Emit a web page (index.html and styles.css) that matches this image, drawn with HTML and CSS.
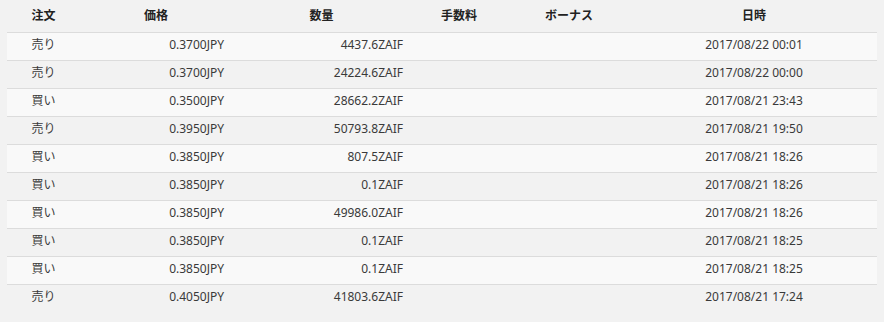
FILE: index.html
```html
<!DOCTYPE html>
<html lang="ja">
<head>
<meta charset="utf-8">
<link rel="stylesheet" href="styles.css">
</head>
<body>
<table class="trades">
  <colgroup>
    <col class="c-type"><col class="c-price"><col class="c-amount"><col class="c-fee"><col class="c-bonus"><col class="c-date">
  </colgroup>
  <thead>
    <tr><th>注文</th><th>価格</th><th>数量</th><th>手数料</th><th>ボーナス</th><th>日時</th></tr>
  </thead>
  <tbody>
    <tr><td class="center">売り</td><td class="num">0.3700JPY</td><td class="num">4437.6ZAIF</td><td></td><td></td><td class="center">2017/08/22 00:01</td></tr>
    <tr><td class="center">売り</td><td class="num">0.3700JPY</td><td class="num">24224.6ZAIF</td><td></td><td></td><td class="center">2017/08/22 00:00</td></tr>
    <tr><td class="center">買い</td><td class="num">0.3500JPY</td><td class="num">28662.2ZAIF</td><td></td><td></td><td class="center">2017/08/21 23:43</td></tr>
    <tr><td class="center">売り</td><td class="num">0.3950JPY</td><td class="num">50793.8ZAIF</td><td></td><td></td><td class="center">2017/08/21 19:50</td></tr>
    <tr><td class="center">買い</td><td class="num">0.3850JPY</td><td class="num">807.5ZAIF</td><td></td><td></td><td class="center">2017/08/21 18:26</td></tr>
    <tr><td class="center">買い</td><td class="num">0.3850JPY</td><td class="num">0.1ZAIF</td><td></td><td></td><td class="center">2017/08/21 18:26</td></tr>
    <tr><td class="center">買い</td><td class="num">0.3850JPY</td><td class="num">49986.0ZAIF</td><td></td><td></td><td class="center">2017/08/21 18:26</td></tr>
    <tr><td class="center">買い</td><td class="num">0.3850JPY</td><td class="num">0.1ZAIF</td><td></td><td></td><td class="center">2017/08/21 18:25</td></tr>
    <tr><td class="center">買い</td><td class="num">0.3850JPY</td><td class="num">0.1ZAIF</td><td></td><td></td><td class="center">2017/08/21 18:25</td></tr>
    <tr><td class="center">売り</td><td class="num">0.4050JPY</td><td class="num">41803.6ZAIF</td><td></td><td></td><td class="center">2017/08/21 17:24</td></tr>
  </tbody>
</table>
</body>
</html>
```
FILE: styles.css
```css
html, body {
  margin: 0;
  padding: 0;
  background: #f2f2f2;
}
body {
  font-family: "Noto Sans", "Noto Sans CJK JP", sans-serif;
  font-size: 12px;
  color: #3a3a3a;
}
.trades {
  margin: 0 7px;
  width: 870px;
  table-layout: fixed;
  border-collapse: collapse;
  border-spacing: 0;
}
.c-type { width: 73px; }
.c-price { width: 152px; }
.c-amount { width: 179px; }
.c-fee { width: 96px; }
.c-bonus { width: 124px; }
.c-date { width: 246px; }

.trades th {
  height: 32px;
  padding: 0;
  font-weight: bold;
  color: #222;
  text-align: center;
  vertical-align: middle;
  line-height: 16px;
}
.trades td {
  height: 27px;
  padding: 0 0 3px 0;
  box-sizing: border-box;
  border-top: 1px solid #dcdcdc;
  vertical-align: middle;
  line-height: 16px;
  white-space: nowrap;
}
.trades tbody tr { height: 28px; }
.trades tbody tr:nth-child(odd) { background: #f9f9f9; }
.trades td.center { text-align: center; }
.trades td.num { text-align: right; padding-right: 8px; }
```
